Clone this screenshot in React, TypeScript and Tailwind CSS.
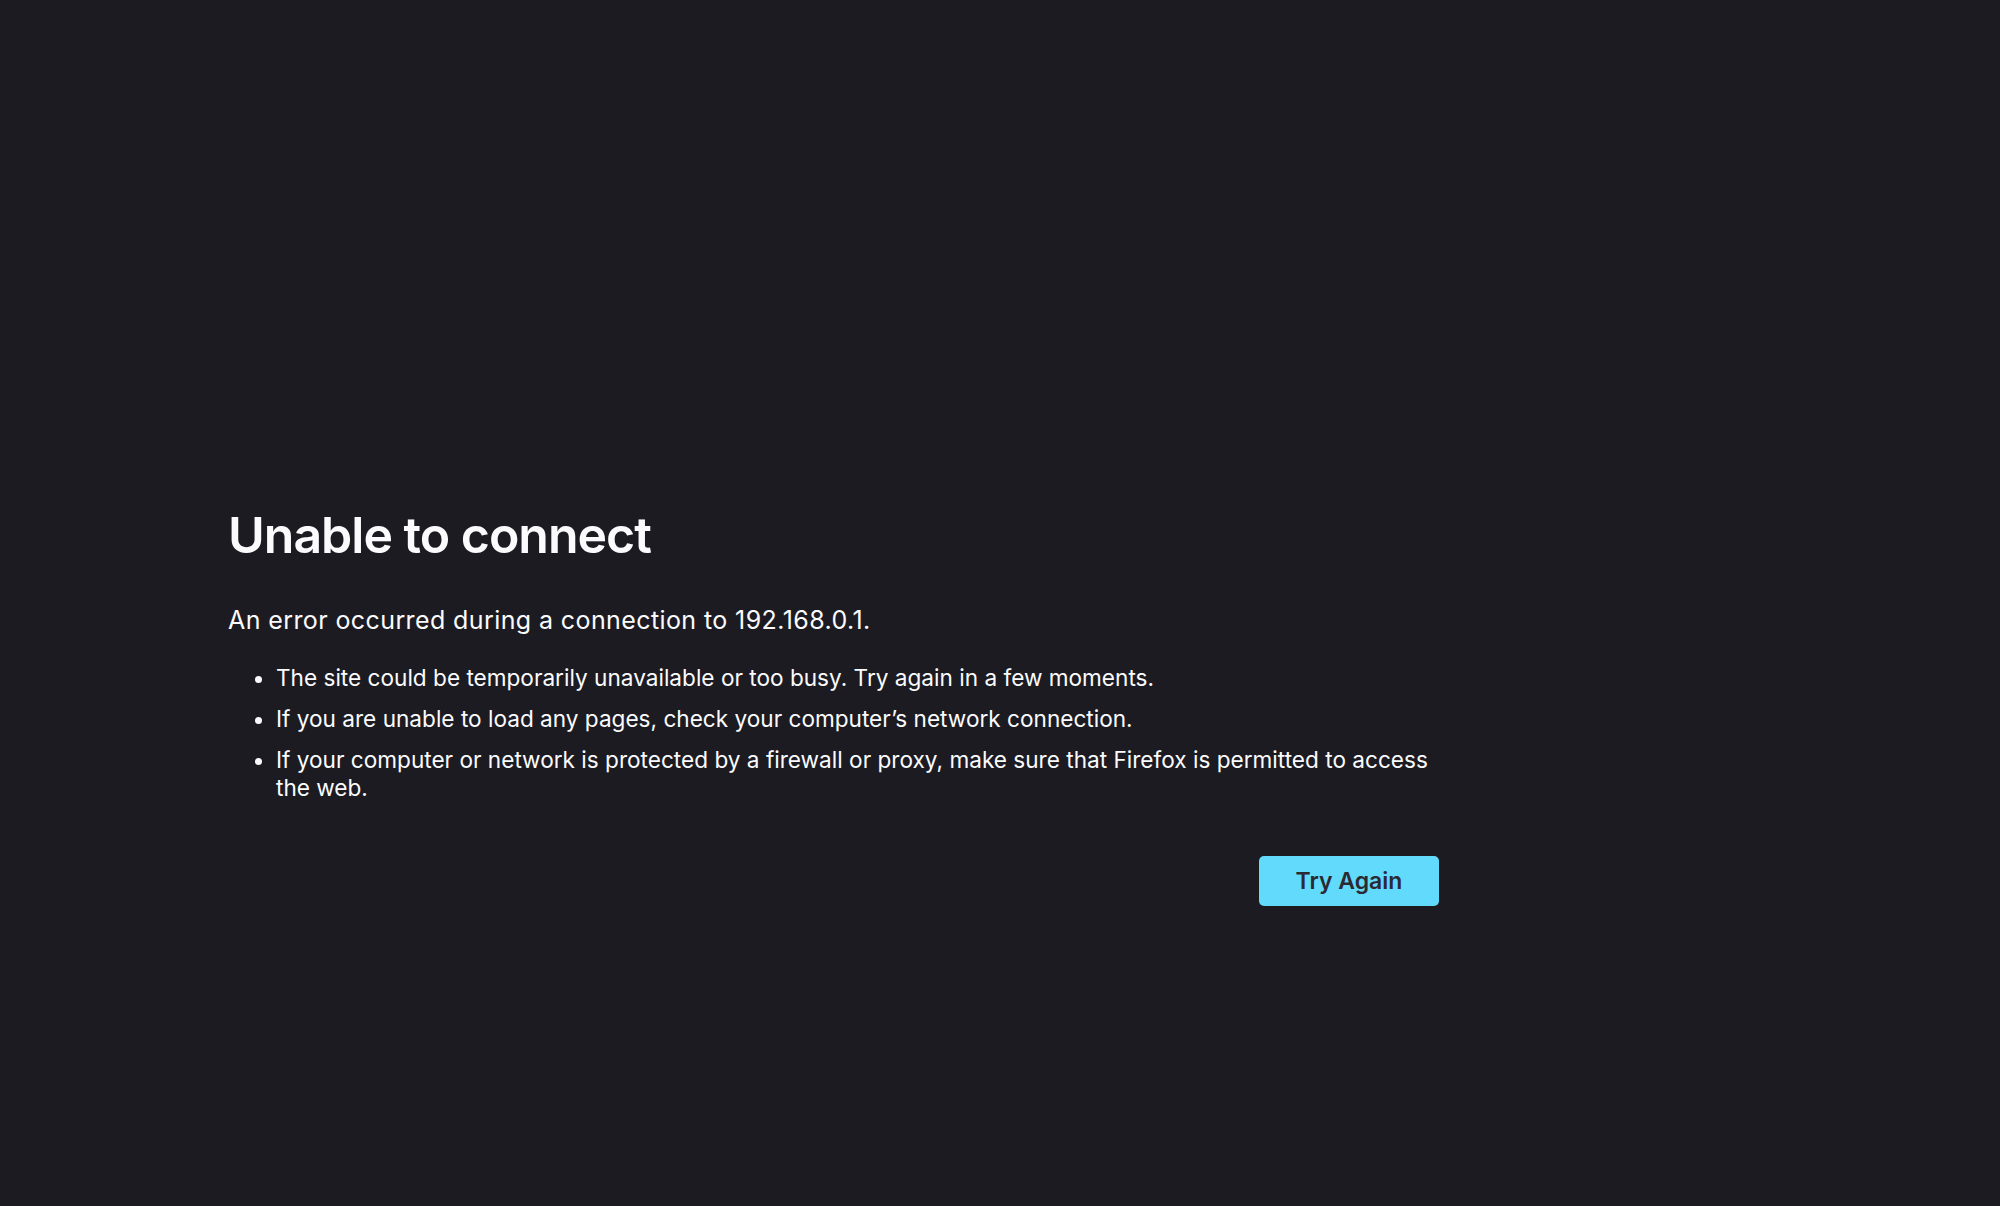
import React from "react";

const items = [
  "The site could be temporarily unavailable or too busy. Try again in a few moments.",
  "If you are unable to load any pages, check your computer\u2019s network connection.",
  "If your computer or network is protected by a firewall or proxy, make sure that Firefox is permitted to access the web.",
];

const App = () => {
  return (
    <main
      className="min-h-screen w-full bg-[#1c1b22] text-[#fbfbfe] pt-[505px] pl-[228px]"
      style={{ fontFamily: "Inter, 'Noto Sans', sans-serif" }}>
      <div className="w-[1211px] flex flex-col">
        <h1 className="text-[50px] leading-[60px] font-semibold tracking-[-0.02em]">
          Unable to connect
        </h1>
        <p className="mt-[40px] text-[25px] leading-[30px] tracking-[0.016em]">
          An error occurred during a connection to 192.168.0.1.
        </p>
        <ul className="mt-[29px] list-disc pl-[48px] text-[22.6px] leading-[28px]">
          {items.map((t) => (
            <li key={t} className="mb-[13px]">
              {t}
            </li>
          ))}
        </ul>
        <div className="flex justify-end mt-[41px]">
          <button className="h-[50px] w-[180px] rounded-[5px] bg-[#62dafc] text-[#2b2a33] text-[23px] font-semibold">
            Try Again
          </button>
        </div>
      </div>
    </main>
  );
};

export default App;
